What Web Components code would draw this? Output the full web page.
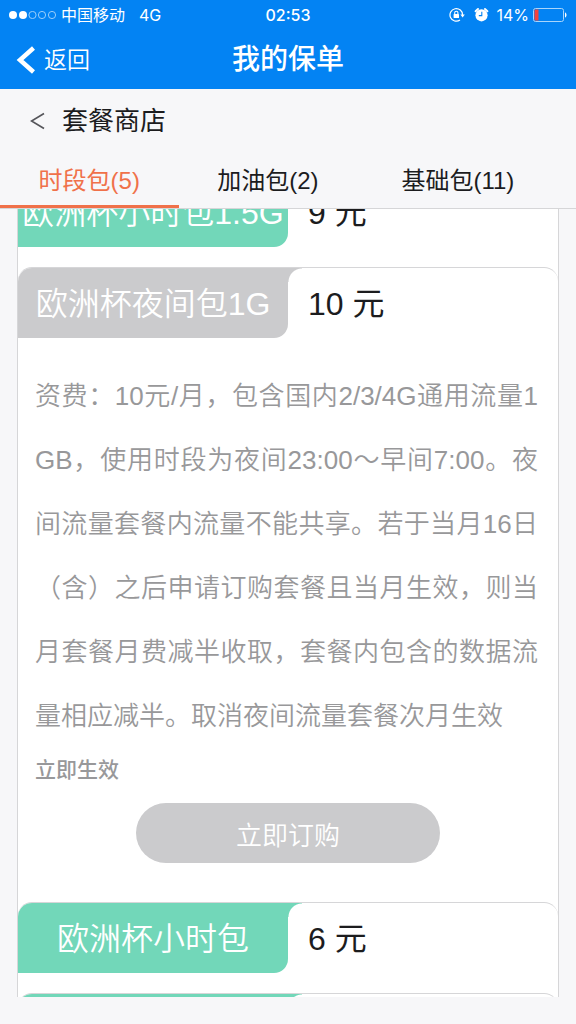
<!DOCTYPE html>
<html lang="zh-CN">
<head>
<meta charset="utf-8">
<meta name="viewport" content="width=device-width, initial-scale=1">
<title>我的保单</title>
<style>
  html, body { margin: 0; height: 100%; }
  body {
    font-family: "Liberation Sans", "Noto Sans CJK SC", sans-serif;
    color: #1c1c1e;
    background: #f7f7f9;
    --brand: #0383f3;
    --accent: #f0714a;
    --green: #72d7b9;
    --muted: #cbcbcd;
    --line: #d6d6d8;
  }
</style>
</head>
<body>
<shop-app>
  <status-bar slot="top" carrier="中国移动" network="4G" time="02:53" battery="14"></status-bar>
  <nav-bar slot="top" back="返回">我的保单</nav-bar>
  <shop-heading slot="top">套餐商店</shop-heading>
  <tab-strip slot="top">
    <button role="tab" aria-selected="true">时段包(5)</button>
    <button role="tab" aria-selected="false">加油包(2)</button>
    <button role="tab" aria-selected="false">基础包(11)</button>
  </tab-strip>
  <plan-list start="33">
    <plan-card name="欧洲杯小时包1.5G" price="9 元"></plan-card>
    <plan-card name="欧洲杯夜间包1G" price="10 元" muted>
      <plan-detail effect="立即生效" action="立即订购">资费：10元/月，包含国内2/3/4G通用流量1GB，使用时段为夜间23:00～早间7:00。夜间流量套餐内流量不能共享。若于当月16日（含）之后申请订购套餐且当月生效，则当月套餐月费减半收取，套餐内包含的数据流量相应减半。取消夜间流量套餐次月生效</plan-detail>
    </plan-card>
    <plan-card name="欧洲杯小时包" price="6 元"></plan-card>
    <plan-card></plan-card>
  </plan-list>
</shop-app>

<script>
const define = (tag, render, ready) => customElements.define(tag, class extends HTMLElement {
  connectedCallback() {
    if (this.shadowRoot) return;
    this.attachShadow({ mode: 'open' }).innerHTML = render(name => this.getAttribute(name) || '');
    if (ready) ready(this);
  }
});

define('shop-app', () => `
  <style>
    :host { display: flex; flex-direction: column; height: 100vh; }
    main { flex: 1; min-height: 0; display: flex; padding: 0 17px 27px; }
    ::slotted(plan-list) { flex: 1; }
  </style>
  <header><slot name="top"></slot></header>
  <main><slot></slot></main>`);

define('status-bar', a => `
  <style>
    :host {
      display: grid; grid-template-columns: 1fr auto 1fr; align-items: center;
      height: 30px; padding: 0 8px; color: #fff; background: var(--brand);
      font: 16px/30px Inter, "Noto Sans CJK SC", sans-serif;
    }
    div { display: flex; align-items: center; white-space: nowrap; }
    .carrier { margin-left: 5px; }
    .network { margin-left: 14px; }
    .time { font-weight: 500; }
    .right { justify-content: flex-end; }
    .lock { margin-right: 9px; }
    .alarm { margin-right: 7px; }
    .cell { margin-left: 4px; }
    svg { display: block; flex: none; }
  </style>
  <div>
    <svg width="48" height="10" viewBox="0 0 48 10" fill="none" stroke="#fff" stroke-width=".8" aria-hidden="true">
      <circle cx="5" cy="5" r="4" fill="#fff" stroke="none"/><circle cx="15" cy="5" r="4" fill="#fff" stroke="none"/>
      <g opacity=".75"><circle cx="24.500" cy="5" r="3.600"/><circle cx="34" cy="5" r="3.600"/><circle cx="44" cy="5" r="3.600"/></g>
    </svg>
    <span class="carrier">${a('carrier')}</span><span class="network">${a('network')}</span>
  </div>
  <div class="time">${a('time')}</div>
  <div class="right">
    <svg class="lock" width="16" height="16" viewBox="0 0 16 16" fill="none" stroke="#fff" aria-hidden="true">
      <path d="M13.600 8A6.300 6.300 0 1 0 11 13" stroke-width="1.200"/>
      <path d="M11.400 7.500h4.400L13.600 10.500z" fill="#fff" stroke="none"/>
      <rect x="4.600" y="7" width="5.400" height="4" rx=".5" fill="#fff" stroke="none"/>
      <path d="M5.700 7V5.800a1.600 1.600 0 0 1 3.200 0V7" stroke-width="1.100"/>
    </svg>
    <svg class="alarm" width="15" height="16" viewBox="0 0 15 16" aria-hidden="true">
      <path d="M1.600 4.200 4 2M13.400 4.200 11 2" stroke="#fff" stroke-width="2" stroke-linecap="round"/>
      <circle cx="7.500" cy="8.300" r="6.100" fill="#fff"/>
      <path d="M7.800 4.800V8.600H4.800" fill="none" stroke="#0383f3" stroke-width="1.100"/>
    </svg>
    <span>${a('battery')}%</span>
    <svg class="cell" width="35" height="14" viewBox="0 0 35 14" fill="none" aria-hidden="true">
      <rect x=".5" y=".5" width="30" height="13" rx="2" stroke="#a9d5fb"/>
      <path d="M2.500 1.500H5.500v11H2.500a1 1 0 0 1-1-1v-9a1 1 0 0 1 1-1z" fill="#f5423c"/>
      <path d="M32 4.500c2 .5 2 4.500 0 5z" fill="#fff"/>
    </svg>
  </div>`);

define('nav-bar', a => `
  <style>
    :host {
      display: grid; grid-template-columns: 1fr auto 1fr; align-items: center;
      height: 59px; padding: 0 16px; color: #fff; background: var(--brand);
    }
    a { display: flex; align-items: center; gap: 8px; color: inherit; font-size: 23px; line-height: 28px; font-weight: 350; text-decoration: none; }
    h1 { margin: 0; font-size: 28px; line-height: 58px; font-weight: 500; }
  </style>
  <a href="#back"><svg width="20" height="28" viewBox="0 0 20 28" fill="none" stroke="#fff" stroke-width="4.500" aria-hidden="true"><path d="M17.500 2 4 14 17.500 26"/></svg>${a('back')}</a>
  <h1><slot></slot></h1>`);

define('shop-heading', () => `
  <style>
    :host { display: flex; align-items: center; gap: 17px; height: 64px; padding: 0 30px; }
    a { display: block; color: #55555a; }
    svg { display: block; }
    h2 { margin: 0; font-size: 26px; line-height: 36px; font-weight: 400; }
  </style>
  <a href="#plans" aria-label="返回套餐"><svg width="15" height="18" viewBox="0 0 15 18" fill="none" stroke="currentColor" stroke-width="1.700"><path d="M14 1.500 1.500 9 14 16.500"/></svg></a>
  <h2><slot></slot></h2>`);

define('tab-strip', () => `
  <style>
    :host { display: block; border-bottom: 1px solid var(--line); }
    div { display: grid; grid-template-columns: 31% 31% 35%; height: 55px; }
    ::slotted(button) {
      margin: 0; padding: 3px 0 0; border: 0; border-bottom: 3px solid transparent;
      background: none; color: inherit; font: inherit; font-size: 24px; line-height: 32px; white-space: nowrap;
    }
    ::slotted(button[aria-selected="true"]) { color: var(--accent); border-bottom-color: var(--accent); }
  </style>
  <div role="tablist"><slot></slot></div>`);

define('plan-list', () => `
  <style>
    :host { display: block; min-width: 0; overflow-y: auto; scrollbar-width: none; }
    div { border: solid var(--line); border-width: 0 1px; background: #fff; }
  </style>
  <div><slot></slot></div>`,
  el => requestAnimationFrame(() => { el.scrollTop = Number(el.getAttribute('start')); }));

define('plan-card', a => `
  <style>
    :host { display: block; --tone: var(--green); }
    :host([muted]) { --tone: var(--muted); }
    article { border-top: 1px solid var(--line); border-radius: 14px 14px 0 0; padding-bottom: 20px; }
    :host([muted]) article { padding-bottom: 39px; }
    header { display: flex; height: 70px; font-size: 32px; line-height: 72px; white-space: nowrap; }
    h3 {
      position: relative; width: 50%; margin: 0; border-radius: 14px 0 14px 0;
      background: var(--tone); color: #fff; font-size: 32px; font-weight: 350; text-align: center;
    }
    h3::after {
      content: ""; position: absolute; left: 100%; top: 0; width: 14px; height: 14px;
      background: radial-gradient(circle at 100% 100%, transparent 13px, var(--tone) 14px);
    }
    p { margin: 0; padding-left: 20px; }
  </style>
  <article>
    <header><h3>${a('name')}</h3><p>${a('price')}</p></header>
    <slot></slot>
  </article>`);

define('plan-detail', a => `
  <style>
    :host { display: block; padding: 26px 17px 0; color: #98989a; }
    p { margin: 0; padding-right: 3px; font-size: 26px; line-height: 64px; font-weight: 350; text-align: justify; word-break: break-all; }
    strong { display: block; font-size: 21px; line-height: 44px; font-weight: 500; }
    button {
      display: block; width: 304px; max-width: 100%; height: 60px; margin: 11px auto 0; padding: 0;
      border: 0; border-radius: 30px; background: var(--muted); color: #fff;
      font: inherit; font-size: 26px; font-weight: 350;
    }
  </style>
  <p><slot></slot></p>
  <strong>${a('effect')}</strong>
  <button type="button">${a('action')}</button>`);
</script>
</body>
</html>
